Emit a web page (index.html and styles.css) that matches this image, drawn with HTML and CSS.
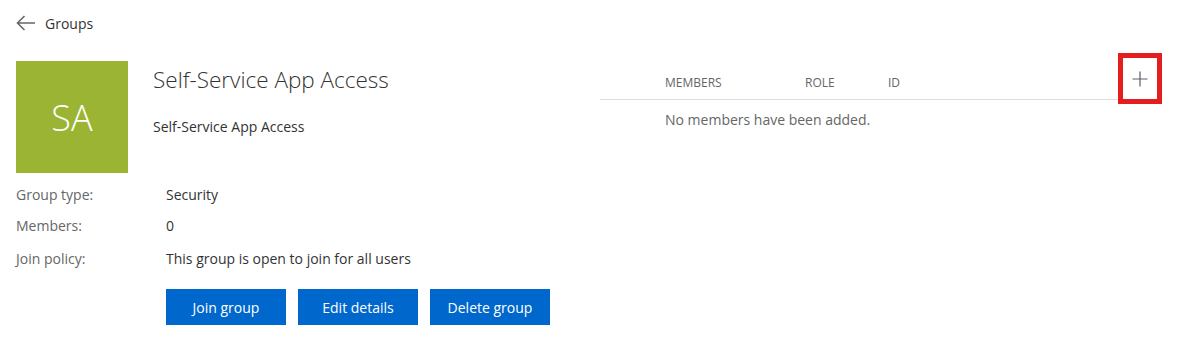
FILE: index.html
```html
<!DOCTYPE html>
<html>

<head>
  <title>Self-Service App Access</title>
  <link rel="stylesheet" href="styles.css">
</head>

<body>
  <div class="back">
    <svg class="back-arrow" width="20" height="16" viewBox="0 0 20 16">
      <path d="M19 8H1.5M8.5 1L1.5 8l7 7" fill="none" stroke="#666" stroke-width="1.6"/>
    </svg>
    <span>Groups</span>
  </div>

  <div class="page">
    <div class="group">
      <div class="head">
        <div class="tile">SA</div>
        <div class="names">
          <h1>Self-Service App Access</h1>
          <p class="desc">Self-Service App Access</p>
        </div>
      </div>

      <div class="props">
        <div class="label">Group type:</div>
        <div class="value">Security</div>
        <div class="label">Members:</div>
        <div class="value">0</div>
        <div class="label policy">Join policy:</div>
        <div class="value policy">This group is open to join for all users</div>
      </div>

      <div class="actions">
        <button class="butt">Join group</button>
        <button class="butt">Edit details</button>
        <button class="butt">Delete group</button>
      </div>
    </div>

    <div class="members">
      <div class="cols">
        <span class="col-members">MEMBERS</span>
        <span class="col-role">ROLE</span>
        <span class="col-id">ID</span>
        <button class="add" title="Add members">
          <svg width="16" height="16" viewBox="0 0 16 16">
            <path d="M8 0.5v15M0.5 8h15" stroke="#5e5a6a" stroke-width="1.2"/>
          </svg>
        </button>
      </div>
      <div class="empty">No members have been added.</div>
    </div>
  </div>
</body>

</html>
```

FILE: styles.css
```css
html,
body {
  margin: 0;
  font-family: "Segoe UI", "Open Sans", sans-serif;
  font-size: 14px;
  color: #333333;
  background-color: #ffffff;
}

.back {
  display: flex;
  align-items: center;
  gap: 9px;
  height: 20px;
  padding: 13px 16px 0;
}

.back span {
  font-size: 14px;
}

.page {
  display: flex;
  padding: 28px 0 0 16px;
}

.group {
  width: 584px;
}

.head {
  display: flex;
}

.tile {
  width: 112px;
  height: 112px;
  background-color: #9cb434;
  color: #ffffff;
  font-size: 36px;
  font-weight: 300;
  display: flex;
  align-items: center;
  justify-content: center;
}

.names {
  padding-left: 25px;
}

h1 {
  margin: 3px 0 0;
  font-size: 22.5px;
  font-weight: 300;
  line-height: 32px;
}

.desc {
  margin: 21px 0 0;
  line-height: 20px;
}

.props {
  display: grid;
  grid-template-columns: 150px auto;
  row-gap: 11px;
  margin-top: 12px;
  line-height: 20px;
}

.props .policy {
  margin-top: 2px;
}

.label {
  color: #666666;
}

.actions {
  display: flex;
  gap: 12px;
  margin: 20px 0 0 150px;
}

.butt {
  width: 120px;
  height: 36px;
  border: none;
  background-color: #0067cc;
  color: #ffffff;
  font-family: "Segoe UI", "Open Sans", sans-serif;
  font-size: 14px;
  padding: 0;
}

.members {
  width: 562px;
  margin-top: -8px;
}

.cols {
  display: flex;
  align-items: flex-start;
  height: 46px;
  border-bottom: 1px solid #dddddd;
  padding-left: 65px;
  font-size: 12px;
  color: #666666;
}

.cols span {
  margin-top: 21px;
}

.col-members {
  width: 140px;
}

.col-role {
  width: 83px;
}

.col-id {
  flex: 1;
}

.add {
  box-sizing: border-box;
  width: 44px;
  height: 51px;
  border: 5px solid #e41e1e;
  background-color: #ffffff;
  padding: 0;
  display: flex;
  align-items: center;
  justify-content: center;
}

.empty {
  padding: 10px 0 0 65px;
  color: #666666;
  line-height: 20px;
}
```
